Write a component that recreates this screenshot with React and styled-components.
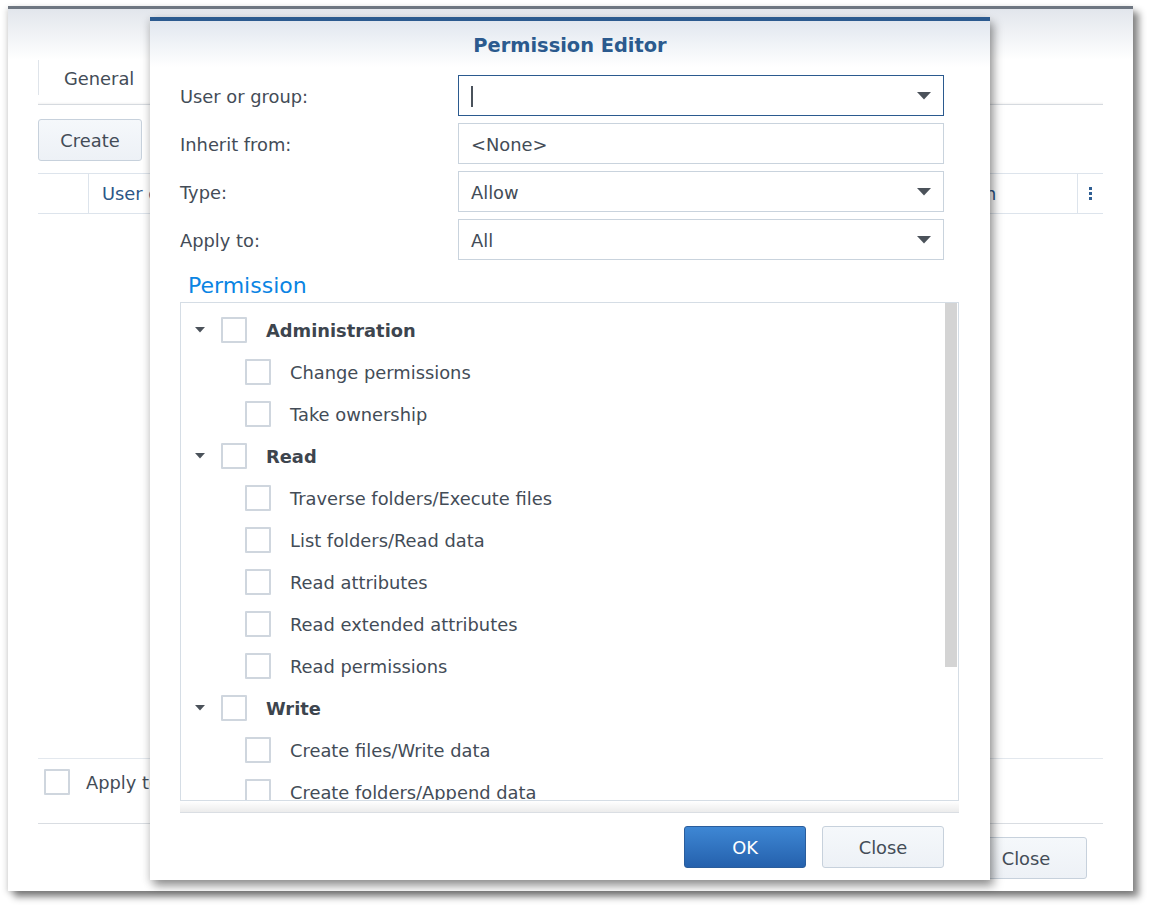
import React from "react";
import styled, { createGlobalStyle } from "styled-components";

const GlobalStyle = createGlobalStyle`
  html, body {
    margin: 0;
    padding: 0;
    background: #ffffff;
  }
  body {
    font-family: "DejaVu Sans", Verdana, sans-serif;
    font-size: 17.85px;
    color: #434c57;
  }
  * {
    box-sizing: border-box;
  }
`;

const Desktop = styled.div`
  position: relative;
  width: 1149px;
  height: 908px;
  overflow: hidden;
  background: #fff;
`;

// background window
const Window = styled.div`
  position: absolute;
  left: 8px;
  top: 6px;
  width: 1125px;
  height: 885px;
  display: flex;
  flex-direction: column;
  background: #fff;
  border-top: 3px solid #6e7681;
  box-shadow: 6px 6px 7px rgba(0, 0, 0, 0.45), -1px 2px 6px rgba(0, 0, 0, 0.18);
`;

const WinHeader = styled.div`
  height: 51px;
  flex: none;
  background: linear-gradient(to bottom, #e2e6ec, #ffffff);
`;

const TabBar = styled.div`
  height: 45px;
  flex: none;
  margin: 0 30px;
  display: flex;
  align-items: flex-start;
  border-bottom: 1px solid #d6dadf;
  box-shadow: 0 -2px 2px -1px rgba(0, 0, 0, 0.05) inset;
`;

const Tab = styled.div`
  height: 35px;
  display: flex;
  align-items: center;
  padding: 2px 25px 0;
  border-left: 1px solid #dfe4ea;
  color: #434c57;
`;

const Toolbar = styled.div`
  flex: none;
  padding: 14px 30px 12px;
  display: flex;
  gap: 10px;
`;

const Button = styled.button`
  height: 42px;
  width: ${(p) => p.$w || 122}px;
  font: inherit;
  border-radius: 3px;
  border: 1px solid ${(p) => (p.$primary ? "#2a5d9c" : "#c7d1dc")};
  background: ${(p) =>
    p.$primary
      ? "linear-gradient(to bottom, #3e87d4, #2561ad)"
      : "linear-gradient(to bottom, #f5f8fb, #edf1f6)"};
  color: ${(p) => (p.$primary ? "#ffffff" : "#434c57")};
  padding: 0;
  cursor: pointer;
`;

const Table = styled.div`
  flex: 1;
  margin: 0 30px;
  display: flex;
  flex-direction: column;
  border-bottom: 1px solid #e3e8ee;
`;

const HeadRow = styled.div`
  height: 41px;
  display: grid;
  grid-template-columns: 50px 1fr 190px 26px;
  border-top: 1px solid #dde4ec;
  border-bottom: 1px solid #dde4ec;
`;

const HeadCell = styled.div`
  display: flex;
  align-items: center;
  justify-content: ${(p) => (p.$center ? "center" : "flex-start")};
  padding-left: ${(p) => (p.$center ? 0 : 13)}px;
  border-left: ${(p) => (p.$sep ? "1px solid #dde4ec" : "none")};
  color: #2c5687;
  white-space: nowrap;
  overflow: hidden;
`;

const Dots = styled.span`
  display: flex;
  flex-direction: column;
  gap: 2px;
  span {
    width: 3px;
    height: 3px;
    background: #2f5e93;
  }
`;

const ApplyRow = styled.div`
  height: 65px;
  flex: none;
  margin: 0 30px;
  display: flex;
  align-items: flex-start;
  gap: 16px;
  padding: 10px 0 0 6px;
  border-bottom: 1px solid #d9dde2;
  color: #434c57;
  line-height: 27px;
`;

const WinFooter = styled.div`
  height: 67px;
  flex: none;
  display: flex;
  justify-content: flex-end;
  align-items: flex-start;
  padding: 13px 46px 0 0;
`;

// dialog
const Dialog = styled.div`
  position: absolute;
  left: 150px;
  top: 17px;
  width: 840px;
  height: 863px;
  display: flex;
  flex-direction: column;
  background: #fff;
  border-top: 4px solid #2b5a8f;
  box-shadow: 4px 6px 9px rgba(0, 0, 0, 0.38), -2px 2px 8px rgba(0, 0, 0, 0.12);
`;

const DialogHeader = styled.div`
  height: 46px;
  flex: none;
  display: flex;
  align-items: center;
  justify-content: center;
  padding-top: 3px;
  background: linear-gradient(to bottom, #e1e7ef, #ffffff);
  font-size: 19.4px;
  font-weight: bold;
  color: #2b5a8e;
`;

const DialogBody = styled.div`
  flex: 1;
  display: flex;
  flex-direction: column;
  padding: 8px 31px 0 30px;
`;

const Form = styled.div`
  display: grid;
  grid-template-columns: 278px 486px;
  grid-auto-rows: 41px;
  row-gap: 7px;
`;

const Label = styled.div`
  display: flex;
  align-items: center;
  padding-top: 1px;
  color: #434c57;
`;

const Field = styled.div`
  display: flex;
  align-items: center;
  justify-content: space-between;
  padding: 1px 12px 0 12px;
  border: 1px solid ${(p) => (p.$focus ? "#2b5a8f" : "#c9d3dd")};
  background: #fff;
  color: #434c57;
`;

const Cursor = styled.span`
  width: 2px;
  height: 21px;
  background: #4a525b;
`;

const Section = styled.div`
  margin-top: 10px;
  height: 30px;
  margin-bottom: 2px;
  padding-left: 8px;
  display: flex;
  align-items: center;
  font-size: 22px;
  color: #0a84e3;
`;

const List = styled.div`
  height: 499px;
  flex: none;
  display: flex;
  border: 1px solid #d5dde5;
  overflow: hidden;
`;

const ListContent = styled.div`
  flex: 1;
  padding-top: 6px;
  overflow: hidden;
`;

const ScrollTrack = styled.div`
  width: 14px;
  flex: none;
  padding: 0 1px;
`;

const ScrollThumb = styled.div`
  height: ${(p) => p.$h}px;
  background: #d4d4d4;
`;

const Row = styled.div`
  height: 42px;
  display: flex;
  align-items: center;
  padding-left: ${(p) => (p.$child ? 64 : 14)}px;
  font-weight: ${(p) => (p.$child ? "normal" : "bold")};
  color: ${(p) => (p.$child ? "#434c57" : "#3d454e")};
  white-space: nowrap;
`;

const Caret = styled.svg`
  width: 10px;
  height: 6px;
  margin-right: 16px;
  flex: none;
`;

const Check = styled.span`
  width: 26px;
  height: 26px;
  flex: none;
  border: 2px solid #cfd6de;
  border-radius: 1px;
  background: #fff;
  margin-right: ${(p) => (p.$flat ? 0 : 19)}px;
`;

const Band = styled.div`
  height: 12px;
  flex: none;
  background: linear-gradient(to bottom, #ffffff, #ececec);
  border-bottom: 1px solid #dadee3;
`;

const DialogFooter = styled.div`
  flex: 1;
  display: flex;
  justify-content: flex-end;
  gap: 16px;
  padding: 13px 46px 0 0;
`;

const Arrow = () => (
  <svg width="14" height="8" viewBox="0 0 14 8">
    <path d="M0 0 H14 L7 7.5 Z" fill="#4b525a" />
  </svg>
);

const groups = [
  { name: "Administration", items: ["Change permissions", "Take ownership"] },
  {
    name: "Read",
    items: [
      "Traverse folders/Execute files",
      "List folders/Read data",
      "Read attributes",
      "Read extended attributes",
      "Read permissions",
    ],
  },
  {
    name: "Write",
    items: [
      "Create files/Write data",
      "Create folders/Append data",
      "Write attributes",
      "Write extended attributes",
      "Delete subfolders and files",
      "Delete",
    ],
  },
];

const fields = [
  { label: "User or group:", focus: true, drop: true },
  { label: "Inherit from:", value: "<None>" },
  { label: "Type:", value: "Allow", drop: true },
  { label: "Apply to:", value: "All", drop: true },
];

const App = () => {
  return (
    <Desktop>
      <GlobalStyle />
      <Window>
        <WinHeader />
        <TabBar>
          <Tab>General</Tab>
        </TabBar>
        <Toolbar>
          <Button $w={104}>Create</Button>
        </Toolbar>
        <Table>
          <HeadRow>
            <HeadCell />
            <HeadCell $sep>User or group</HeadCell>
            <HeadCell>Permission</HeadCell>
            <HeadCell $sep $center>
              <Dots>
                <span />
                <span />
                <span />
              </Dots>
            </HeadCell>
          </HeadRow>
        </Table>
        <ApplyRow>
          <Check $flat />
          Apply to this folder, sub-folders and files
        </ApplyRow>
        <WinFooter>
          <Button>Close</Button>
        </WinFooter>
      </Window>

      <Dialog>
        <DialogHeader>Permission Editor</DialogHeader>
        <DialogBody>
          <Form>
            {fields.map((f) => (
              <React.Fragment key={f.label}>
                <Label>{f.label}</Label>
                <Field $focus={f.focus}>
                  {f.focus ? <Cursor /> : <span>{f.value}</span>}
                  {f.drop && <Arrow />}
                </Field>
              </React.Fragment>
            ))}
          </Form>
          <Section>Permission</Section>
          <List>
            <ListContent>
              {groups.map((g) => (
                <React.Fragment key={g.name}>
                  <Row>
                    <Caret viewBox="0 0 10 6">
                      <path d="M0 0 H10 L5 5.5 Z" fill="#4b525a" />
                    </Caret>
                    <Check />
                    {g.name}
                  </Row>
                  {g.items.map((it) => (
                    <Row $child key={it}>
                      <Check />
                      {it}
                    </Row>
                  ))}
                </React.Fragment>
              ))}
            </ListContent>
            <ScrollTrack>
              <ScrollThumb $h={364} />
            </ScrollTrack>
          </List>
          <Band />
        </DialogBody>
        <DialogFooter>
          <Button $primary>OK</Button>
          <Button>Close</Button>
        </DialogFooter>
      </Dialog>
    </Desktop>
  );
};

export default App;
